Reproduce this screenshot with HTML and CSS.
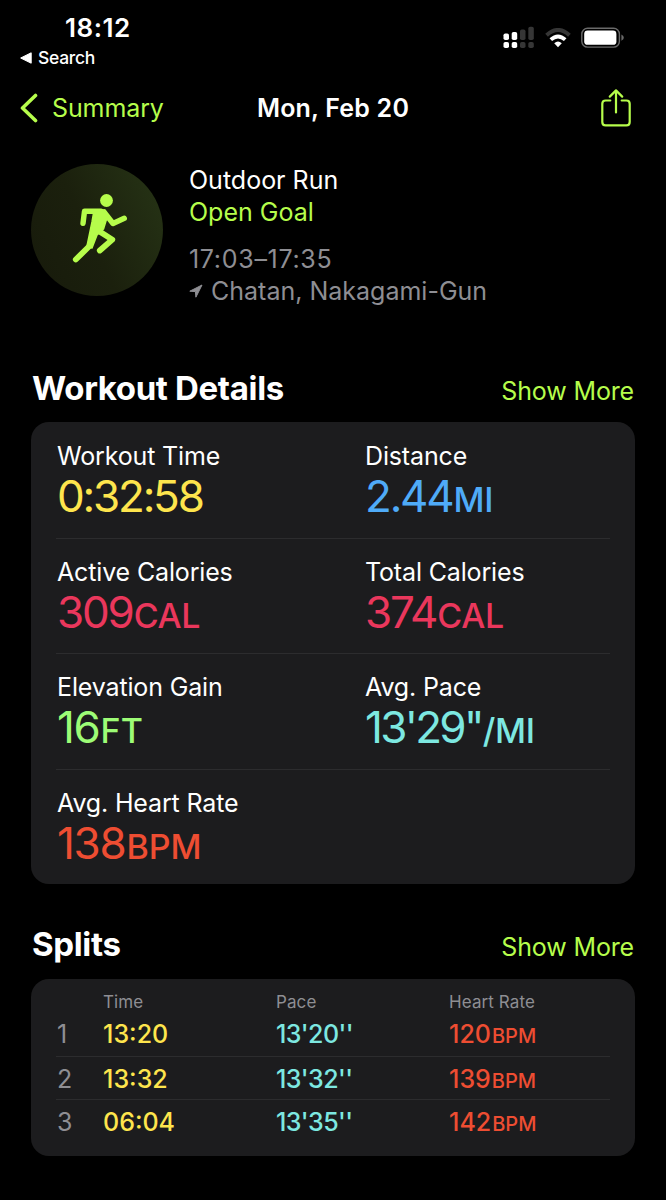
FILE: index.html
```html
<!DOCTYPE html>
<html lang="en">
<head>
    <meta charset="UTF-8">
    <title>Workout Summary</title>
    <link rel="stylesheet" href="styles.css">
</head>
<body>
    <div class="status-bar">
        <div class="status-left">
            <div class="clock">18:12</div>
            <div class="back-app">
                <svg width="12" height="12" viewBox="0 0 12 12"><path d="M0.700 6L11.200 0.800V11.200Z" fill="#fff" stroke="#fff" stroke-width="1" stroke-linejoin="round"/></svg>
                <span>Search</span>
            </div>
        </div>
        <div class="status-icons">
            <svg width="32" height="24" viewBox="0 0 32 24">
                <g fill="#fff">
                    <rect x="0.5" y="7.5" width="5.5" height="6.5" rx="1.8"/>
                    <rect x="8.7" y="6" width="5.5" height="8" rx="1.8"/>
                    <rect x="0.5" y="16" width="5.5" height="6" rx="1.8"/>
                    <rect x="8.7" y="16" width="5.5" height="6" rx="1.8"/>
                </g>
                <g fill="#363636">
                    <rect x="17" y="3.5" width="5.5" height="10.5" rx="1.8"/>
                    <rect x="25.3" y="0.7" width="5.5" height="13.3" rx="1.8"/>
                    <rect x="17" y="16" width="5.5" height="6" rx="1.8"/>
                    <rect x="25.3" y="16" width="5.5" height="6" rx="1.8"/>
                </g>
            </svg>
            <svg width="26" height="20" viewBox="0 0 26 20">
                <path d="M1.6 7.2Q13 -3.2 24.4 7.2" fill="none" stroke="#363636" stroke-width="4"/>
                <path d="M5.8 11.7Q13 5.2 20.2 11.7" fill="none" stroke="#fff" stroke-width="3.8"/>
                <path d="M9.2 15.2Q13 12 16.8 15.2L13 19.2Z" fill="#fff"/>
            </svg>
            <svg width="43" height="22" viewBox="0 0 43 22">
                <rect x="0.8" y="1.3" width="37.6" height="18.8" rx="5.8" fill="none" stroke="#6a6a6a" stroke-width="1.4"/>
                <rect x="3.2" y="3.6" width="32.2" height="14.2" rx="3.4" fill="#fff"/>
                <path d="M40.4 7.6Q43 9 42.8 10.7Q43 12.4 40.4 13.8Z" fill="#6a6a6a"/>
            </svg>
        </div>
    </div>

    <div class="nav">
        <div class="nav-back">
            <svg width="18" height="30" viewBox="0 0 18 30"><path d="M15.5 2.5L2.5 15L15.5 27.5" fill="none" stroke="#b6fd4b" stroke-width="3.6" stroke-linecap="round" stroke-linejoin="round"/></svg>
            <span>Summary</span>
        </div>
        <div class="nav-title">Mon, Feb 20</div>
        <div class="nav-share">
            <svg width="30" height="38" viewBox="0 0 30 38" fill="none" stroke="#b6fd4b" stroke-width="2.2" stroke-linecap="round" stroke-linejoin="round">
                <path d="M9.3 11.5H4.6Q1.3 11.5 1.3 14.8V33Q1.3 36.4 4.6 36.4H25.4Q28.7 36.4 28.7 33V14.8Q28.7 11.5 25.4 11.5H20.7"/>
                <path d="M15 23.5V1.6M8.8 7.6L15 1.4L21.2 7.6"/>
            </svg>
        </div>
    </div>

    <div class="workout">
        <div class="workout-icon">
            <svg width="132" height="132" viewBox="0 0 132 132" fill="none" stroke="#b6fd4b" stroke-linecap="round" stroke-linejoin="round">
                <circle cx="75.5" cy="36.5" r="6.4" fill="#b6fd4b" stroke="none"/>
                <path d="M52 59.3L53.5 47.3H70" stroke-width="5.4"/>
                <path d="M73 48L82 59.5L93.3 54.3" stroke-width="5.4"/>
                <path d="M63 46.5L74 46L76.5 52L72.5 65L66 71L61 84L56 82L61 58Z" fill="#b6fd4b" stroke-width="1.5"/>
                <path d="M58 82.5L44.8 95.5" stroke-width="5.8"/>
                <path d="M67 66.5L81.300 75.600L68.800 86.500" stroke-width="5.800"/>
            </svg>
        </div>
        <div class="workout-info">
            <div class="workout-name">Outdoor Run</div>
            <div class="workout-goal">Open Goal</div>
            <div class="workout-time">17:03–17:35</div>
            <div class="workout-place">
                <svg width="14" height="14" viewBox="0 0 14 14"><path d="M13 1L0.8 7.2L6.4 7.6L6.9 13.2Z" fill="#8e8e93" stroke="#8e8e93" stroke-linejoin="round"/></svg>
                <span>Chatan, Nakagami-Gun</span>
            </div>
        </div>
    </div>

    <div class="section-header">
        <h2>Workout Details</h2>
        <span class="show-more">Show More</span>
    </div>
    <div class="card details">
        <div class="detail-row">
            <div class="detail">
                <div class="label">Workout Time</div>
                <div class="value yellow">0:32:58</div>
            </div>
            <div class="detail">
                <div class="label">Distance</div>
                <div class="value blue">2.44<span class="unit">MI</span></div>
            </div>
        </div>
        <div class="detail-row">
            <div class="detail">
                <div class="label">Active Calories</div>
                <div class="value pink">309<span class="unit">CAL</span></div>
            </div>
            <div class="detail">
                <div class="label">Total Calories</div>
                <div class="value pink">374<span class="unit">CAL</span></div>
            </div>
        </div>
        <div class="detail-row">
            <div class="detail">
                <div class="label">Elevation Gain</div>
                <div class="value wide green">16<span class="unit">FT</span></div>
            </div>
            <div class="detail">
                <div class="label">Avg. Pace</div>
                <div class="value pace cyan">13'29"<span class="unit">/MI</span></div>
            </div>
        </div>
        <div class="detail-row">
            <div class="detail">
                <div class="label">Avg. Heart Rate</div>
                <div class="value wide red">138<span class="unit">BPM</span></div>
            </div>
        </div>
    </div>

    <div class="section-header splits-header">
        <h2>Splits</h2>
        <span class="show-more">Show More</span>
    </div>
    <div class="card splits">
        <div class="split-head">
            <span></span>
            <span>Time</span>
            <span>Pace</span>
            <span>Heart Rate</span>
        </div>
        <div class="split-row">
            <span class="split-no">1</span>
            <span class="yellow">13:20</span>
            <span class="split-pace cyan">13'20''</span>
            <span class="red">120<span class="unit">BPM</span></span>
        </div>
        <div class="split-row">
            <span class="split-no">2</span>
            <span class="yellow">13:32</span>
            <span class="split-pace cyan">13'32''</span>
            <span class="red">139<span class="unit">BPM</span></span>
        </div>
        <div class="split-row">
            <span class="split-no">3</span>
            <span class="yellow">06:04</span>
            <span class="split-pace cyan">13'35''</span>
            <span class="red">142<span class="unit">BPM</span></span>
        </div>
    </div>
</body>
</html>
```
FILE: styles.css
```css
* {
    box-sizing: border-box;
}
body {
    margin: 0;
    width: 666px;
    height: 1200px;
    overflow: hidden;
    background: #000;
    color: #fff;
    font-family: Inter, "Liberation Sans", sans-serif;
    font-size: 25px;
    line-height: 32px;
    white-space: nowrap;
}
svg {
    display: block;
    flex: none;
}
.status-bar {
    display: flex;
    justify-content: space-between;
    height: 76px;
    padding: 12px 42px 0 20px;
}
.clock {
    padding-left: 45px;
    font-size: 26px;
    font-weight: 600;
    letter-spacing: 0.5px;
}
.back-app {
    display: flex;
    align-items: center;
    gap: 6px;
    height: 28px;
    font-size: 17.5px;
    font-weight: 500;
    letter-spacing: -0.3px;
}
.status-icons {
    display: flex;
    align-items: center;
    height: 52px;
    gap: 10px;
}
.nav {
    display: grid;
    grid-template-columns: 1fr auto 1fr;
    align-items: center;
    height: 63px;
    padding: 0 20px;
    color: #b6fd4b;
}
.nav-back {
    display: flex;
    align-items: center;
    gap: 14px;
    letter-spacing: -0.1px;
}
.nav-title {
    color: #fff;
    font-weight: 600;
    letter-spacing: 0.2px;
}
.nav-share {
    display: flex;
    justify-content: flex-end;
    padding-right: 15px;
}
.workout {
    display: flex;
    gap: 26px;
    padding: 25px 31px 0;
    height: 225px;
}
.workout-icon {
    width: 132px;
    height: 132px;
    border-radius: 50%;
    background: linear-gradient(65deg, #171a0b, #1b200d 45%, #273516);
}
.workout-goal {
    color: #b6fd4b;
}
.workout-time {
    margin-top: 15px;
    color: #8e8e93;
    letter-spacing: 0.7px;
}
.workout-place {
    display: flex;
    align-items: center;
    gap: 8px;
    color: #8e8e93;
}
.section-header {
    display: flex;
    justify-content: space-between;
    align-items: baseline;
    height: 58px;
    padding: 4px 32px 0;
}
.section-header h2 {
    margin: 0;
    font-size: 33px;
    line-height: 40px;
    font-weight: 700;
    letter-spacing: -0.35px;
}
.show-more {
    color: #b6fd4b;
    letter-spacing: -0.15px;
}
.card {
    margin: 0 31px;
    padding: 0 25px;
    background: #1c1c1e;
    border-radius: 18px;
}
.details {
    height: 462px;
}
.detail-row {
    display: grid;
    grid-template-columns: 308px 1fr;
    height: 115.6px;
    padding: 18px 0 0 1px;
}
.detail-row + .detail-row {
    padding-top: 17px;
}
.detail-row + .detail-row,
.split-row + .split-row {
    border-top: 1px solid #2c2c2e;
}
.label {
    letter-spacing: -0.15px;
}
.value {
    font-size: 44px;
    line-height: 49px;
    letter-spacing: -2.2px;
}
.value .unit {
    margin-left: 1px;
    font-size: 34px;
    font-weight: 500;
    letter-spacing: -0.3px;
}
.value.pace {
    letter-spacing: -2.7px;
}
.value.wide {
    letter-spacing: -1.3px;
}
.value.wide .unit {
    letter-spacing: 0;
}
.splits-header {
    margin-top: 36px;
    height: 59px;
}
.splits {
    height: 177px;
    padding-top: 10px;
}
.split-head,
.split-row {
    display: grid;
    grid-template-columns: 46px 173px 173px 1fr;
    padding-left: 1px;
}
.split-head {
    height: 23px;
    line-height: 26px;
    font-size: 17px;
    letter-spacing: 0.1px;
    color: #8e8e93;
}
.split-row {
    height: 43.6px;
    line-height: 44px;
    font-weight: 500;
}
.split-row .unit {
    margin-left: 1px;
    font-size: 20px;
}
.split-pace {
    letter-spacing: -0.6px;
}
.split-no {
    font-weight: 400;
    color: #8e8e93;
}
.yellow { color: #fee54d; }
.blue { color: #4fabf8; }
.pink { color: #ea375c; }
.green { color: #9dfc76; }
.cyan { color: #7de8e1; }
.red { color: #ee4d32; }
```
